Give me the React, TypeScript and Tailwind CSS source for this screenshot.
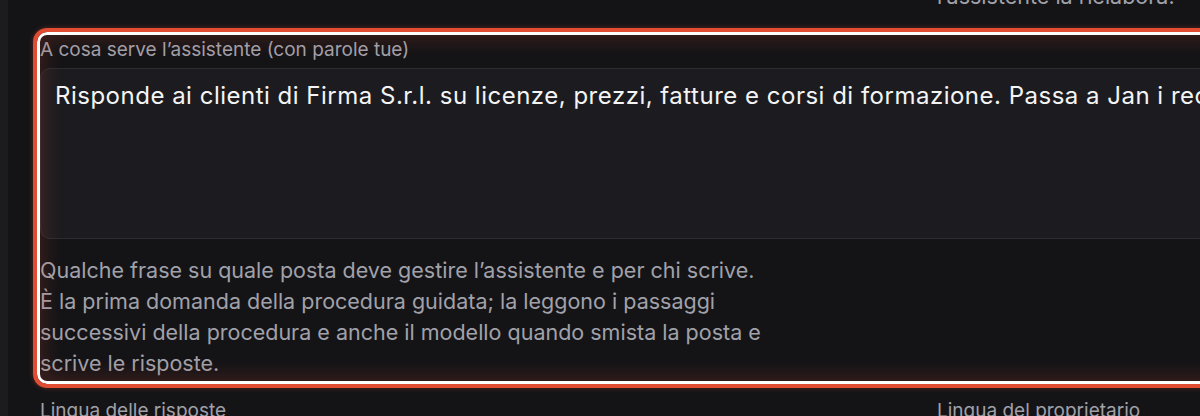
import React from "react";

export default function App() {
  return (
    <div
      className="flex h-[416px] w-[1200px] overflow-hidden bg-[#141417] text-[#a1a1aa]"
      style={{ fontFamily: "Inter, 'Noto Sans', sans-serif" }}
    >
      <div className="h-full w-[8px] shrink-0 bg-[#1c1c1f]" />
      <div className="shrink-0 pl-[32px]">
        <div className="grid w-[1762px] grid-cols-2 gap-x-[32px]">
          <div />
          <p className="-mt-[19px] text-[21.5px] leading-[31px] text-[#a1a1aa]">
            l’assistente la rielabora.
          </p>

          <div className="relative col-span-2 mt-[23px] pb-[2px]">
            <div className="pointer-events-none absolute -inset-[7px] z-10 rounded-[14px] border-[4px] border-[#e14d33] shadow-[inset_0_0_0_3px_#ffffff,inset_0_0_20px_7px_rgba(225,77,51,0.22),0_0_5px_rgba(225,77,51,0.35)]" />
            <label className="block text-[19px] leading-[30px] text-[#a1a1aa]">
              A cosa serve l’assistente (con parole tue)
            </label>
            <textarea
              readOnly
              wrap="off"
              className="mt-[3px] block h-[171px] w-full resize-none overflow-hidden rounded-[10px] border border-[#2c2c31] bg-[#1c1c20] px-[14px] pt-[11px] text-[24px] leading-[31px] tracking-[0.5px] text-[#f4f4f5] outline-none"
              defaultValue="Risponde ai clienti di Firma S.r.l. su licenze, prezzi, fatture e corsi di formazione. Passa a Jan i reclami e le richieste di rimborso."
            />
            <div className="mt-[16px] max-w-[760px] text-[21.5px] leading-[31px] text-[#a1a1aa]">
              <p>Qualche frase su quale posta deve gestire l’assistente e per chi scrive.</p>
              <p>
                È la prima domanda della procedura guidata; la leggono i passaggi successivi della procedura e anche il modello quando smista la posta e scrive le risposte.
              </p>
            </div>
          </div>

          <label className="mt-[15px] block text-[19px] leading-[30px] text-[#a1a1aa]">
            Lingua delle risposte
          </label>
          <label className="mt-[15px] block text-[19px] leading-[30px] text-[#a1a1aa]">
            Lingua del proprietario
          </label>
        </div>
      </div>
    </div>
  );
}
